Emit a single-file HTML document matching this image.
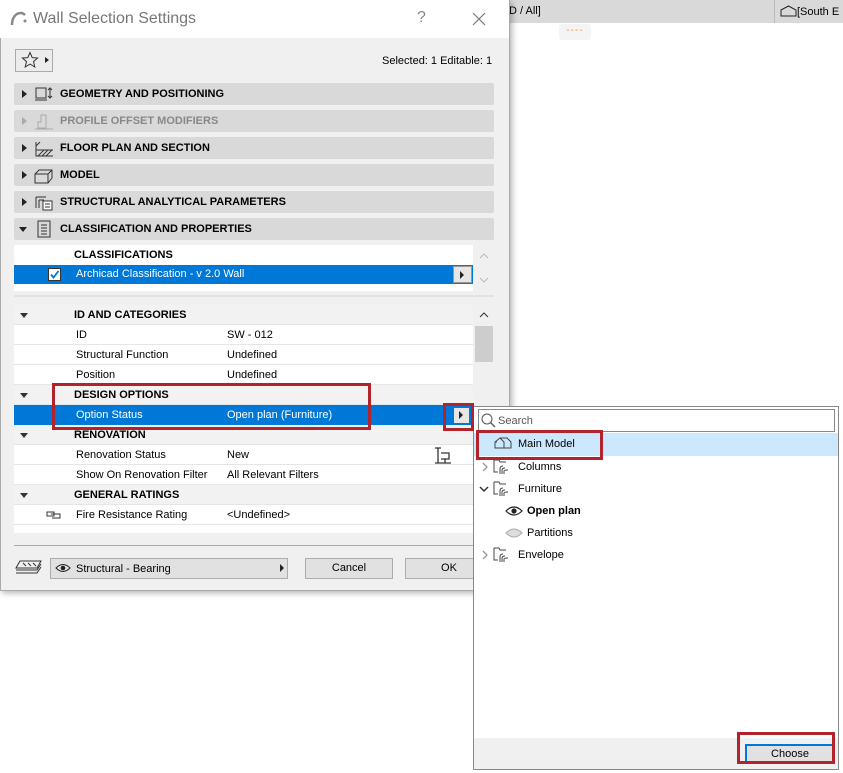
<!DOCTYPE html>
<html><head><style>
*{box-sizing:border-box;margin:0;padding:0}
body{width:843px;height:773px;background:#fff;position:relative;overflow:hidden;font-family:"Liberation Sans",sans-serif;font-size:11px;color:#000}
.a{position:absolute}
.sec{position:absolute;left:14px;width:480px;height:22px;background:#d9d9d9;border-radius:2px;font-weight:bold;font-size:11px;line-height:22px}
.sec .t{position:absolute;left:46px}
.sec .tri{position:absolute;left:8px;top:7px;width:0;height:0;border-left:5px solid #222;border-top:4px solid transparent;border-bottom:4px solid transparent}
.row{position:absolute;left:14px;width:459px;height:20px;line-height:20px;background:#fff;border-bottom:1px solid #e6e6e6}
.row.h{background:#f2f2f2;font-weight:bold}
.row .l{position:absolute;left:62px}
.row .v{position:absolute;left:213px}
.row .dt{position:absolute;left:6px;top:8px;border-top:5px solid #333;border-left:4px solid transparent;border-right:4px solid transparent}
.red{position:absolute;border:3px solid #b3232b}
.pi{position:absolute;left:44px;height:22px;line-height:22px;font-size:11px}
</style></head><body>
<!-- background app -->
<div class="a" style="left:500px;top:0;width:343px;height:23px;background:#d9d9d9"></div>
<div class="a" style="left:774px;top:0;width:1px;height:23px;background:#bbb"></div>
<div class="a" style="left:509px;top:5px;font-size:11px">D / All]</div>
<div class="a" style="left:780px;top:5px;font-size:11px"><svg width="17" height="12" style="vertical-align:-2px"><path d="M1 5 L8.5 1 L16 5 V11 H1 Z" fill="none" stroke="#222"/></svg>[South E</div>
<div class="a" style="left:559px;top:24px;width:32px;height:16px;background:#f4f4f4;border-radius:3px;color:#f39c3c;font-size:10px;text-align:center;line-height:14px;letter-spacing:1px">----</div>

<!-- dialog -->
<div class="a" style="left:0;top:0;width:510px;height:591px;background:#f0f0f0;box-shadow:2px 2px 6px rgba(0,0,0,.3);border:1px solid #aaa;border-top:none"></div>
<div class="a" style="left:0;top:0;width:509px;height:38px;background:#fff"></div>
<svg class="a" style="left:10px;top:11px" width="18" height="16"><path d="M2 14 C2 6 6 2 11 2 C13 2 14 3 15 4" fill="none" stroke="#888" stroke-width="2.5"/><circle cx="15" cy="10" r="1.5" fill="#888"/></svg>
<div class="a" style="left:33px;top:10px;font-size:16px;color:#777">Wall Selection Settings</div>
<div class="a" style="left:417px;top:9px;font-size:16px;color:#888">?</div>
<svg class="a" style="left:472px;top:12px" width="14" height="14"><path d="M1 1L13 13M13 1L1 13" stroke="#777" stroke-width="1.2"/></svg>

<div class="a" style="left:15px;top:49px;width:38px;height:23px;border:1px solid #aaa;background:#ececec"></div>
<svg class="a" style="left:21px;top:51px" width="18" height="18"><path d="M9 1.5 L11.2 6.6 L16.6 7 L12.5 10.6 L13.8 16 L9 13.1 L4.2 16 L5.5 10.6 L1.4 7 L6.8 6.6 Z" fill="none" stroke="#333"/></svg>
<div class="a" style="left:45px;top:57px;border-left:4px solid #222;border-top:3.5px solid transparent;border-bottom:3.5px solid transparent"></div>
<div class="a" style="left:382px;top:55px;font-size:11px">Selected: 1 Editable: 1</div>

<div class="sec" style="top:83px"><div class="tri"></div><svg class="a" style="left:20px;top:3px" width="20" height="17"><rect x="2" y="2" width="10" height="10" fill="none" stroke="#333"/><path d="M1 14 H13 M16 2 V12 M14 4 L16 2 L18 4 M14 10 L16 12 L18 10" stroke="#333" fill="none"/></svg><span class="t">GEOMETRY AND POSITIONING</span></div>
<div class="sec" style="top:110px;color:#888"><div class="tri" style="border-left-color:#aaa"></div><svg class="a" style="left:20px;top:3px" width="20" height="17"><path d="M7 2 H12 V15 H4 V9 H7 Z M1 16 H19" fill="none" stroke="#aaa"/></svg><span class="t">PROFILE OFFSET MODIFIERS</span></div>
<div class="sec" style="top:137px"><div class="tri"></div><svg class="a" style="left:20px;top:3px" width="20" height="17"><path d="M2 2 V16 H19 M2 10 H19 M4 16 L10 10 M8 16 L14 10 M12 16 L18 10 M2 6 L6 2" fill="none" stroke="#333"/></svg><span class="t">FLOOR PLAN AND SECTION</span></div>
<div class="sec" style="top:164px"><div class="tri"></div><svg class="a" style="left:20px;top:3px" width="20" height="17"><path d="M1 7 L5 3 H18 V11 L14 16 H1 Z M1 7 H14 V16 M14 7 L18 3" fill="none" stroke="#333"/></svg><span class="t">MODEL</span></div>
<div class="sec" style="top:191px"><div class="tri"></div><svg class="a" style="left:20px;top:3px" width="20" height="17"><path d="M2 3 H12 M2 3 V14 M5 6 H10 M5 6 V14" fill="none" stroke="#333"/><rect x="9" y="7" width="9" height="9" fill="#fff" stroke="#333"/><path d="M11 10 H16 M11 13 H16" stroke="#333"/></svg><span class="t">STRUCTURAL ANALYTICAL PARAMETERS</span></div>
<div class="sec" style="top:218px"><div class="a" style="left:5px;top:9px;border-top:5px solid #222;border-left:4px solid transparent;border-right:4px solid transparent"></div><svg class="a" style="left:23px;top:2px" width="14" height="18"><path d="M1 1 H13 V17 H1 Z M4 5 H10 M4 8 H10 M4 11 H10 M4 14 H10" fill="none" stroke="#333"/></svg><span class="t">CLASSIFICATION AND PROPERTIES</span></div>

<!-- classifications -->
<div class="a" style="left:14px;top:245px;width:459px;height:46px;background:#fff"></div>
<div class="a" style="left:74px;top:249px;font-weight:bold">CLASSIFICATIONS</div>
<div class="a" style="left:14px;top:265px;width:459px;height:19px;background:#0078d7"></div>
<div class="a" style="left:48px;top:268px;width:13px;height:13px;background:#fff;border:1px solid #333"></div>
<svg class="a" style="left:49px;top:269px" width="11" height="11"><path d="M2 5.5 L4.5 8.5 L9.5 2" fill="none" stroke="#0078d7" stroke-width="1.8"/></svg>
<div class="a" style="left:76px;top:268px;color:#fff">Archicad Classification - v 2.0 Wall</div>
<div class="a" style="left:453px;top:266px;width:19px;height:17px;background:#e6e6e6;border:1px solid #999"></div>
<div class="a" style="left:460px;top:271px;border-left:4px solid #222;border-top:4px solid transparent;border-bottom:4px solid transparent"></div>
<svg class="a" style="left:477px;top:250px" width="14" height="36"><path d="M3 8 L7 4 L11 8 M3 28 L7 32 L11 28" fill="none" stroke="#bbb"/></svg>
<div class="a" style="left:14px;top:295px;width:480px;height:2px;background:#e2e2e2"></div>

<!-- properties -->
<div class="row h" style="top:305px"><div class="dt"></div><span class="l" style="left:60px">ID AND CATEGORIES</span></div>
<div class="row" style="top:325px"><span class="l">ID</span><span class="v">SW - 012</span></div>
<div class="row" style="top:345px"><span class="l">Structural Function</span><span class="v">Undefined</span></div>
<div class="row" style="top:365px"><span class="l">Position</span><span class="v">Undefined</span></div>
<div class="row h" style="top:385px"><div class="dt"></div><span class="l" style="left:60px">DESIGN OPTIONS</span></div>
<div class="row" style="top:405px;background:#0078d7;color:#fff;border:none"><span class="l">Option Status</span><span class="v">Open plan (Furniture)</span></div>
<div class="a" style="left:453px;top:407px;width:17px;height:17px;background:#e6e6e6;border:1px solid #0078d7"></div>
<div class="a" style="left:459px;top:411px;border-left:4px solid #222;border-top:4px solid transparent;border-bottom:4px solid transparent"></div>
<div class="row h" style="top:425px"><div class="dt"></div><span class="l" style="left:60px">RENOVATION</span></div>
<div class="row" style="top:445px"><span class="l">Renovation Status</span><span class="v">New</span></div>
<svg class="a" style="left:433px;top:446px" width="20" height="20"><path d="M2 2 H8 M5 2 V17 M2 17 H18 M8 7 H16 V13 H8 M12 13 V17" fill="none" stroke="#333" stroke-width="1.3"/></svg>
<div class="row" style="top:465px"><span class="l">Show On Renovation Filter</span><span class="v">All Relevant Filters</span></div>
<div class="row h" style="top:485px"><div class="dt"></div><span class="l" style="left:60px">GENERAL RATINGS</span></div>
<div class="row" style="top:505px"><svg class="a" style="left:32px;top:5px" width="16" height="10"><path d="M1 2 H8 V6 H1 Z M5 4 H14 V8 H6" fill="none" stroke="#333"/></svg><span class="l">Fire Resistance Rating</span><span class="v">&lt;Undefined&gt;</span></div>
<div class="a" style="left:14px;top:525px;width:459px;height:8px;background:#fff;overflow:hidden"></div>
<div class="a" style="left:474px;top:305px;width:20px;height:228px;background:#f0f0f0"></div>
<svg class="a" style="left:477px;top:310px" width="14" height="10"><path d="M3 7 L7 3 L11 7" fill="none" stroke="#333"/></svg>
<div class="a" style="left:475px;top:326px;width:18px;height:36px;background:#cdcdcd"></div>
<div class="a" style="left:14px;top:545px;width:460px;height:1px;background:#aaa"></div>

<!-- footer -->
<svg class="a" style="left:15px;top:559px" width="27" height="18"><path d="M5 2 H26 L22 9 H1 Z M1 11 H22 L26 5 M1 14 H22 L26 8" fill="none" stroke="#333"/><path d="M8 4 L11 7 M13 4 L16 7 M18 4 L21 7" stroke="#333"/></svg>
<div class="a" style="left:50px;top:558px;width:238px;height:21px;background:#e1e1e1;border:1px solid #adadad"></div>
<svg class="a" style="left:55px;top:563px" width="16" height="10"><path d="M1 5 Q8 -2 15 5 Q8 12 1 5 Z" fill="none" stroke="#222"/><circle cx="8" cy="5" r="2.3" fill="#222"/></svg>
<div class="a" style="left:76px;top:563px">Structural - Bearing</div>
<div class="a" style="left:280px;top:564px;border-left:4px solid #222;border-top:4px solid transparent;border-bottom:4px solid transparent"></div>
<div class="a" style="left:305px;top:558px;width:88px;height:21px;background:#e1e1e1;border:1px solid #adadad;text-align:center;line-height:19px">Cancel</div>
<div class="a" style="left:405px;top:558px;width:88px;height:21px;background:#e1e1e1;border:1px solid #adadad;text-align:center;line-height:19px">OK</div>

<!-- popup -->
<div class="a" style="left:473px;top:406px;width:366px;height:364px;background:#fff;border:1px solid #888"></div>
<div class="a" style="left:478px;top:409px;width:357px;height:23px;border:1px solid #888;background:#fff"></div>
<svg class="a" style="left:481px;top:413px" width="15" height="15"><circle cx="6" cy="6" r="5" fill="none" stroke="#555"/><path d="M9.5 9.5 L14 14" stroke="#555" stroke-width="1.3"/></svg>
<div class="a" style="left:498px;top:415px;color:#555">Search</div>
<div class="a" style="left:474px;top:433px;width:364px;height:23px;background:#cce8ff"></div>
<div class="a" style="left:474px;top:456px;width:364px;height:313px">
 <svg class="a" style="left:20px;top:-20px" width="18" height="14"><path d="M1 12 V6 L6 2 H13 L17 6 V12 Z M6 2 L10 6 V12 M1 6 H3" fill="none" stroke="#444"/></svg>
 <div class="pi" style="top:-23px">Main Model</div>
 <div class="pi" style="top:0">Columns</div>
 <div class="pi" style="top:22px">Furniture</div>
 <div class="pi" style="top:44px;left:53px;font-weight:bold">Open plan</div>
 <div class="pi" style="top:66px;left:53px">Partitions</div>
 <div class="pi" style="top:88px">Envelope</div>
 <svg class="a" style="left:6px;top:5px" width="10" height="12"><path d="M3 2 L7 6 L3 10" fill="none" stroke="#999" stroke-width="1.3"/></svg>
 <svg class="a" style="left:4px;top:28px" width="12" height="10"><path d="M2 3 L6 7 L10 3" fill="none" stroke="#333" stroke-width="1.5"/></svg>
 <svg class="a" style="left:6px;top:93px" width="10" height="12"><path d="M3 2 L7 6 L3 10" fill="none" stroke="#999" stroke-width="1.3"/></svg>
 <svg class="a" style="left:19px;top:2px" width="20" height="18"><path d="M1 2 H6 L7 4 H13 M1 2 V14 H5 M7 16 V11 Q7 8 10 8 M9 16 V12 Q9 10 12 10 M11 16 V13 Q11 12 15 12" fill="none" stroke="#444"/></svg>
 <svg class="a" style="left:19px;top:24px" width="20" height="18"><path d="M1 2 H6 L7 4 H13 M1 2 V14 H5 M7 16 V11 Q7 8 10 8 M9 16 V12 Q9 10 12 10 M11 16 V13 Q11 12 15 12" fill="none" stroke="#444"/></svg>
 <svg class="a" style="left:19px;top:90px" width="20" height="18"><path d="M1 2 H6 L7 4 H13 M1 2 V14 H5 M7 16 V11 Q7 8 10 8 M9 16 V12 Q9 10 12 10 M11 16 V13 Q11 12 15 12" fill="none" stroke="#444"/></svg>
 <svg class="a" style="left:31px;top:49px" width="18" height="12"><path d="M1 6 Q9 -2 17 6 Q9 14 1 6 Z" fill="none" stroke="#222" stroke-width="1.2"/><circle cx="9" cy="6" r="2.6" fill="#222"/></svg>
 <svg class="a" style="left:31px;top:71px" width="18" height="12"><path d="M1 6 Q9 -2 17 6 Q9 14 1 6 Z" fill="#ddd" stroke="#aaa"/></svg>
</div>
<div class="a" style="left:474px;top:738px;width:364px;height:31px;background:#f0f0f0"></div>
<div class="a" style="left:745px;top:744px;width:90px;height:20px;background:#e1e1e1;border:2px solid #0078d7;text-align:center;line-height:17px">Choose</div>

<!-- red highlight boxes -->
<div class="red" style="left:52px;top:383px;width:319px;height:47px"></div>
<div class="red" style="left:443px;top:403px;width:31px;height:28px"></div>
<div class="red" style="left:476px;top:430px;width:127px;height:30px"></div>
<div class="red" style="left:737px;top:732px;width:98px;height:32px"></div>
</body></html>
